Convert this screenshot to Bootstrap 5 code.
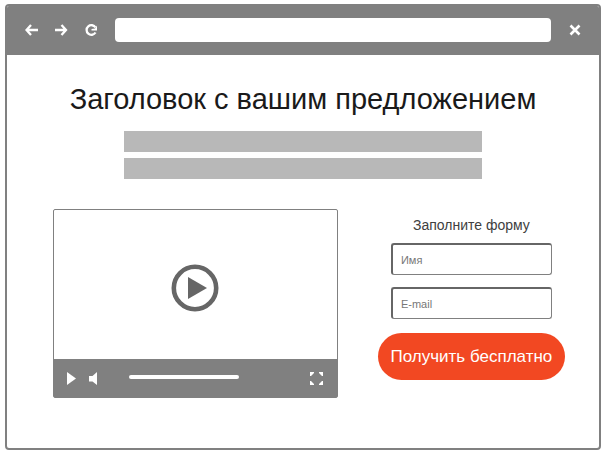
<!DOCTYPE html>
<html lang="ru">
<head>
<meta charset="utf-8">
<meta name="viewport" content="width=device-width, initial-scale=1">
<title>Заголовок с вашим предложением</title>
<link href="https://cdn.jsdelivr.net/npm/bootstrap@5.3.0/dist/css/bootstrap.min.css" rel="stylesheet">
<style>
  body { font-family: "Liberation Sans", Arial, sans-serif; background: #fff; padding: 4px 3px 4px 5px; }
  .browser { border: 2px solid #808080; border-radius: 4px; min-height: calc(100vh - 8px); }
  .toolbar { background: #808080; height: 49px; padding: 0 18px 1px; gap: 18px; }
  .tool-btn { width: 12px; height: 12px; line-height: 0; }
  .tool-btn svg { display: block; }
  .address { height: 24px; border-radius: 4px; min-width: 0; }
  .page-body { padding: 24px 0 50px; }
  .headline { font-size: 29px; line-height: 40px; color: #1a1a1a; margin-bottom: 12px; white-space: nowrap; }
  .text-bars { width: 358px; max-width: 80%; gap: 6px; margin-bottom: 30px; }
  .text-bar { height: 21px; background: #b8b8b8; }
  .offer { gap: 40px; padding: 0 34px 0 46px; }
  .player { flex: 284 1 0; border: 1px solid #808080; border-radius: 2px; }
  .screen { height: 149px; padding-top: 6px; }
  .player-bar { background: #808080; height: 38px; padding: 0 14px 0 13px; }
  .sound { margin-left: 13px; }
  .track { width: 43%; height: 4px; border-radius: 2px; margin-left: 32px; margin-bottom: 2px; }
  .signup { flex: 188 1 0; }
  .form-title { font-size: 14px; line-height: 20px; color: #404040; margin: 6px 0 8px; }
  .field { width: 86%; height: 32px; padding: 0 8px; font-size: 11px; border: 1px solid #808080; border-top: 2px solid #666; border-left: 2px solid #666; border-radius: 3px; margin-bottom: 12px; }
  .field::placeholder { color: #777; opacity: 1; }
  .cta { height: 47px; margin-top: 2px; padding: 0; font-size: 17px; color: #fff; background: #f24822; border: 0; white-space: nowrap; }
  .cta:hover { background: #d93c18; color: #fff; }
</style>
</head>
<body>
<div class="browser d-flex flex-column overflow-hidden">
  <header class="toolbar d-flex align-items-center">
    <button type="button" class="tool-btn btn p-0 border-0" aria-label="Назад">
      <svg width="13" height="12" viewBox="0 0 13 12" fill="none" stroke="#fff" stroke-width="2.300"><path d="M6 1 1.500 6 6 11M1.500 6H13"/></svg>
    </button>
    <button type="button" class="tool-btn btn p-0 border-0" aria-label="Вперёд">
      <svg width="13" height="12" viewBox="0 0 13 12" fill="none" stroke="#fff" stroke-width="2.300"><path d="M6.500 1 11 6l-4.500 5M11 6H0"/></svg>
    </button>
    <button type="button" class="tool-btn btn p-0 border-0" aria-label="Обновить">
      <svg width="12" height="12" viewBox="0 0 12 12" fill="none" stroke="#fff" stroke-width="2.300"><path d="M10.500 8.500A4.800 4.800 0 1 1 10.500 3.500"/><path d="M12 1.500V6.500H6.500V5L10 4.500Z" fill="#fff" stroke="none"/></svg>
    </button>
    <input type="text" class="address form-control border-0 flex-grow-1 py-0" aria-label="Адрес">
    <button type="button" class="tool-btn btn p-0 border-0" aria-label="Закрыть">
      <svg width="12" height="12" viewBox="0 0 12 12" fill="none" stroke="#fff" stroke-width="2.600"><path d="m1.500 1.500 9 9m0-9-9 9"/></svg>
    </button>
  </header>
  <main class="page-body">
    <h1 class="headline text-center fw-normal">Заголовок с вашим предложением</h1>
    <div class="text-bars d-flex flex-column mx-auto">
      <div class="text-bar"></div>
      <div class="text-bar"></div>
    </div>
    <div class="offer d-flex align-items-start">
      <section class="player" aria-label="Видео">
        <div class="screen d-flex align-items-center justify-content-center">
          <button type="button" class="btn p-0 border-0 lh-1" aria-label="Смотреть видео">
            <svg class="d-block" width="48" height="48" viewBox="0 0 48 48"><circle cx="24" cy="24" r="21.200" fill="none" stroke="#666" stroke-width="4.600"/><path d="M17 13v22l19-11z" fill="#666"/></svg>
          </button>
        </div>
        <div class="player-bar d-flex align-items-center">
          <button type="button" class="btn p-0 border-0 lh-1" aria-label="Пуск">
            <svg class="d-block" width="9" height="13" viewBox="0 0 9 13" fill="#fff"><path d="M0 0v13l9-6.500z"/></svg>
          </button>
          <button type="button" class="sound btn p-0 border-0 lh-1" aria-label="Звук">
            <svg class="d-block" width="8" height="13" viewBox="0 0 8 13" fill="#fff"><path d="M0 4h3.500L8 0v13L3.500 9.500H0z"/></svg>
          </button>
          <div class="track bg-white"></div>
          <button type="button" class="btn p-0 border-0 lh-1 ms-auto" aria-label="Во весь экран">
            <svg class="d-block" width="13" height="13" viewBox="0 0 13 13" fill="#fff"><path d="M0 0h4v1L1 4H0zM13 0H9v1l3 3h1zM0 13h4v-1L1 9H0zM13 13H9v-1l3-3h1z"/></svg>
          </button>
        </div>
      </section>
      <form class="signup d-flex flex-column align-items-center">
        <h2 class="form-title fw-normal">Заполните форму</h2>
        <input type="text" class="field form-control" placeholder="Имя" aria-label="Имя">
        <input type="email" class="field form-control" placeholder="E-mail" aria-label="E-mail">
        <button type="submit" class="cta btn rounded-pill w-100">Получить бесплатно</button>
      </form>
    </div>
  </main>
</div>
<script src="https://cdn.jsdelivr.net/npm/bootstrap@5.3.0/dist/js/bootstrap.bundle.min.js"></script>
</body>
</html>
